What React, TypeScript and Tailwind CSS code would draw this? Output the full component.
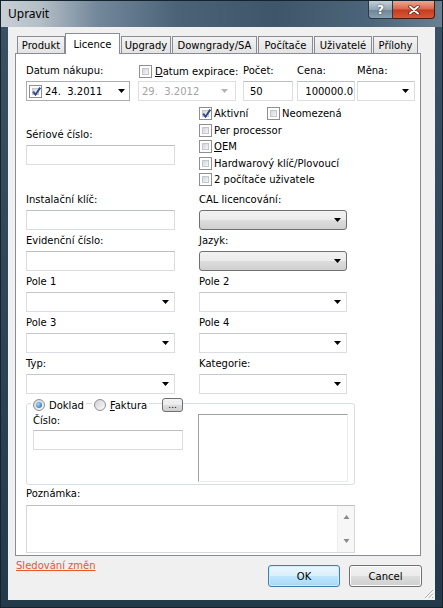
import type { ReactNode } from 'react';

/* Vista-style "Upravit" dialog, Licence tab */

function DropArrow({ dim = false }: { dim?: boolean }) {
  return (
    <svg width="7" height="4" viewBox="0 0 7 4" className="shrink-0">
      <path d="M0 0h7L3.5 4z" fill={dim ? '#b4b4b4' : '#000'} />
    </svg>
  );
}

function CheckBox({ checked = false }: { checked?: boolean }) {
  return (
    <span className="relative flex h-[13px] w-[13px] shrink-0 border border-[#8e8f8f] bg-white p-[2px]">
      <span className="block h-full w-full border border-[#c3c6cb] bg-[linear-gradient(135deg,#d3d6da,#f6f6f6)]" />
      {checked && (
        <svg className="absolute left-[1px] top-[0px]" width="11" height="11" viewBox="0 0 11 11">
          <path d="M2.2 5.6l2.3 3.1L9.3 1.6" fill="none" stroke="#2e4a86" strokeWidth="1.9" />
        </svg>
      )}
    </span>
  );
}

function Radio({ checked = false }: { checked?: boolean }) {
  return (
    <span className="flex h-[12px] w-[12px] shrink-0 items-center justify-center rounded-full border border-[#8e8f8f] bg-[linear-gradient(135deg,#cfd2d6,#fbfbfb)]">
      {checked && <span className="h-[6px] w-[6px] rounded-full bg-[radial-gradient(circle_at_35%_35%,#9fd8ff,#1b5fae)]" />}
    </span>
  );
}

function Label({ children }: { children: ReactNode }) {
  return <div className="h-[14px] whitespace-nowrap leading-[14px]">{children}</div>;
}

function TextBox({ children, className = '' }: { children?: ReactNode; className?: string }) {
  return (
    <div className={`flex h-[20px] items-center border border-[#dadde2] border-t-[#bcc0c5] bg-white ${className}`}>
      {children}
    </div>
  );
}

function Combo() {
  return (
    <div className="flex h-[20px] items-center justify-end border border-[#dadde2] border-t-[#c4c7cc] bg-white pr-[5px]">
      <DropArrow />
    </div>
  );
}

function GrayCombo() {
  return (
    <div className="flex h-[20px] items-center justify-end rounded-[3px] border border-[#707070] bg-[linear-gradient(to_bottom,#f2f2f2_0%,#ebebeb_50%,#dddddd_50%,#cfcfcf_100%)] pr-[5px]">
      <DropArrow />
    </div>
  );
}

function Field({ label, children }: { label: ReactNode; children: ReactNode }) {
  return (
    <div className="flex flex-col gap-[3px]">
      <Label>{label}</Label>
      {children}
    </div>
  );
}

function CheckRow({ label, checked = false }: { label: ReactNode; checked?: boolean }) {
  return (
    <div className="flex h-[13px] items-center gap-[2px] whitespace-nowrap">
      <CheckBox checked={checked} />
      <span className="leading-[13px]">{label}</span>
    </div>
  );
}

const TABS = [
  { name: 'Produkt', w: 'w-[48px]' },
  { name: 'Licence', w: 'w-[55px]', active: true },
  { name: 'Upgrady', w: 'w-[50px] ml-[1px]' },
  { name: 'Downgrady/SA', w: 'w-[85px] ml-[1px]' },
  { name: 'Počítače', w: 'w-[55px] ml-[1px]' },
  { name: 'Uživatelé', w: 'w-[58px] ml-[1px]' },
  { name: 'Přílohy', w: 'w-[45px] ml-[1px]' },
];

export default function App() {
  return (
    <div className="flex h-[608px] w-[443px] flex-col overflow-hidden border border-[#14242f] bg-[linear-gradient(to_bottom,#3a5264,#24394a)] font-['DejaVu_Sans',sans-serif] text-[10px] text-black">
      {/* Title bar */}
      <div className="flex h-[26px] shrink-0 items-start bg-[linear-gradient(to_right,#c9d0d5_0%,#b3bec6_9%,#72879a_22%,#4c6377_40%,#3f566a_62%,#4d657a_84%,#6a7f90_100%)]">
        <span className="mt-[5px] pl-[7px] font-['Noto_Sans',sans-serif] text-[12px] leading-[16px] text-black">Upravit</span>
        <div className="ml-auto mr-[7px] flex">
          <div className="flex h-[18px] w-[25px] items-center justify-center rounded-bl-[4px] border border-t-0 border-[#2a3a48] bg-[linear-gradient(to_bottom,#c6d0d8_0%,#93a4b2_50%,#6f8597_52%,#8aa0b1_100%)] font-['DejaVu_Sans',sans-serif] text-[12px] font-bold text-white [text-shadow:0_0_2px_#233]">
            ?
          </div>
          <div className="flex h-[18px] w-[42px] items-center justify-center rounded-br-[4px] border border-l-0 border-t-0 border-[#4a1a10] bg-[linear-gradient(to_bottom,#e9a894_0%,#d8664a_48%,#c33b1c_52%,#d9573a_100%)]">
            <svg width="12" height="10" viewBox="0 0 12 10">
              <path d="M2 1.5l8 7M10 1.5l-8 7" stroke="#5a1d10" strokeWidth="3.4" strokeLinecap="round" />
              <path d="M2 1.5l8 7M10 1.5l-8 7" stroke="#fff" strokeWidth="2" strokeLinecap="round" />
            </svg>
          </div>
        </div>
      </div>

      {/* Client area */}
      <div className="mx-[7px] flex h-[573px] flex-col bg-[#f0f0f0]">
        {/* Tabs */}
        <div className="relative z-10 ml-[9px] mt-[6px] flex h-[20px] items-end">
          {TABS.map((t) =>
            t.active ? (
              <div
                key={t.name}
                className={`-mb-px flex h-[21px] items-start justify-center border border-b-0 border-[#898c95] bg-white pt-[3px] ${t.w}`}
              >
                {t.name}
              </div>
            ) : (
              <div
                key={t.name}
                className={`flex h-[17px] items-center justify-center border border-b-0 border-[#898c95] bg-[linear-gradient(to_bottom,#f3f3f3,#e3e3e3)] ${t.w}`}
              >
                {t.name}
              </div>
            ),
          )}
        </div>

        {/* Tab panel */}
        <div className="ml-[7px] flex h-[503px] w-[406px] flex-col border border-[#898c95] bg-white pl-[10px] pt-[10px]">
          {/* Row 1 */}
          <div className="flex items-start">
            <div className="w-[104px]">
              <Field label="Datum nákupu:">
                <div className="flex h-[20px] items-center border border-[#abadb3] bg-white pl-[2px] pr-[4px]">
                  <CheckBox checked />
                  <span className="ml-[3px] whitespace-pre">24.  3.2011</span>
                  <span className="ml-auto">
                    <DropArrow />
                  </span>
                </div>
              </Field>
            </div>
            <div className="ml-[8px] w-[98px]">
              <div className="flex flex-col gap-[3px]">
                <div className="flex h-[14px] items-center gap-[3px] whitespace-nowrap pl-[1px]">
                  <CheckBox />
                  <span>
                    <span className="underline">D</span>atum expirace:
                  </span>
                </div>
                <div className="flex h-[20px] items-center border border-[#dcdfe3] bg-white pl-[3px] pr-[7px] text-[#a3a3a3]">
                  <span className="whitespace-pre">29.  3.2012</span>
                  <span className="ml-auto">
                    <DropArrow dim />
                  </span>
                </div>
              </div>
            </div>
            <div className="ml-[7px] w-[50px]">
              <Field label="Počet:">
                <TextBox className="pl-[6px]">50</TextBox>
              </Field>
            </div>
            <div className="ml-[4px] w-[58px]">
              <Field label="Cena:">
                <TextBox className="justify-end overflow-hidden pr-[1px]">100000.0</TextBox>
              </Field>
            </div>
            <div className="ml-[2px] w-[58px]">
              <Field label="Měna:">
                <Combo />
              </Field>
            </div>
          </div>

          {/* Row 2: serial + option checkboxes */}
          <div className="flex items-start">
            <div className="mt-[27px] w-[149px]">
              <Field label="Sériové číslo:">
                <TextBox />
              </Field>
            </div>
            <div className="ml-[24px] mt-[6px] flex flex-col gap-[3.5px]">
              <div className="flex">
                <div className="w-[68px]">
                  <CheckRow label="Aktivní" checked />
                </div>
                <CheckRow label="Neomezená" />
              </div>
              <CheckRow label="Per processor" />
              <CheckRow
                label={
                  <>
                    <span className="underline">O</span>EM
                  </>
                }
              />
              <CheckRow label="Hardwarový klíč/Plovoucí" />
              <CheckRow label="2 počítače uživatele" />
            </div>
          </div>

          {/* Field grid */}
          <div className="mt-[7px] grid grid-cols-[149px_148px] gap-x-[24px] gap-y-[4px]">
            <Field label="Instalační klíč:">
              <TextBox />
            </Field>
            <Field label="CAL licencování:">
              <GrayCombo />
            </Field>
            <Field label="Evidenční číslo:">
              <TextBox />
            </Field>
            <Field label="Jazyk:">
              <GrayCombo />
            </Field>
            <Field label="Pole 1">
              <Combo />
            </Field>
            <Field label="Pole 2">
              <Combo />
            </Field>
            <Field label="Pole 3">
              <Combo />
            </Field>
            <Field label="Pole 4">
              <Combo />
            </Field>
            <Field label="Typ:">
              <Combo />
            </Field>
            <Field label="Kategorie:">
              <Combo />
            </Field>
          </div>

          {/* Document group */}
          <div className="relative mt-[9px] flex h-[82px] w-[329px] rounded-[3px] border border-[#d5dfe5] pl-[6px] pt-[10px]">
            <div className="absolute left-[4px] top-[-6px] flex h-[14px] items-center">
              <div className="flex items-center gap-[4px] bg-white px-[2px]">
                <Radio checked />
                <span>Doklad</span>
              </div>
              <div className="ml-[6px] flex items-center gap-[4px] bg-white px-[2px]">
                <Radio />
                <span>
                  <span className="underline">F</span>aktura
                </span>
              </div>
              <div className="ml-[13px] flex h-[14px] w-[21px] items-end justify-center rounded-[3px] border border-[#707070] bg-[linear-gradient(to_bottom,#f2f2f2_0%,#ebebeb_50%,#dddddd_50%,#cfcfcf_100%)] pb-[1px] text-[9px] leading-[9px]">
                ...
              </div>
            </div>
            <div className="w-[150px]">
              <div className="flex flex-col gap-[2px]">
                <Label>Číslo:</Label>
                <TextBox />
              </div>
            </div>
            <div className="ml-[15px] h-[68px] w-[150px] border border-[#ececec] border-l-[#a0a0a0] border-t-[#a0a0a0] bg-white" />
          </div>

          {/* Note */}
          <div className="mt-[2px] flex flex-col gap-[4px]">
            <Label>Poznámka:</Label>
            <div className="flex h-[48px] w-[329px] justify-end border border-[#d5d9de] border-t-[#bcc0c5] bg-white">
              <div className="flex w-[17px] flex-col justify-between border-l border-[#ededed] bg-[#f7f7f7] py-[9px]">
                <svg width="17" height="4" viewBox="0 0 17 4">
                  <path d="M5.5 4h6L8.5 0z" fill="#8a8a8a" />
                </svg>
                <svg width="17" height="4" viewBox="0 0 17 4">
                  <path d="M5.5 0h6L8.5 4z" fill="#8a8a8a" />
                </svg>
              </div>
            </div>
          </div>
        </div>

        {/* Bottom row */}
        <div className="relative flex h-[44px] items-start pl-[8px] pr-[13px]">
          <a className="mt-[3px] cursor-pointer leading-[14px] text-[#e8572a] underline">Sledování změn</a>
          <div className="ml-auto mt-[9px] flex gap-[9px]">
            <button className="flex h-[22px] w-[72px] items-center justify-center rounded-[3px] border border-[#3c7fb1] bg-[linear-gradient(to_bottom,#eaf6fd_0%,#d9f0fc_50%,#bee6fd_50%,#a7d9f5_100%)] shadow-[inset_0_0_0_1px_#d2ecfa]">
              OK
            </button>
            <button className="flex h-[22px] w-[73px] items-center justify-center rounded-[3px] border border-[#707070] bg-[linear-gradient(to_bottom,#f2f2f2_0%,#ebebeb_50%,#dddddd_50%,#cfcfcf_100%)] shadow-[inset_0_0_0_1px_#fbfbfb]">
              Cancel
            </button>
          </div>
          <svg className="absolute bottom-[1px] right-[1px]" width="11" height="11" viewBox="0 0 11 11">
            <path d="M10 2L2 10M10 5.5L5.5 10M10 9L9 10" stroke="#a9afb5" strokeWidth="1" />
            <path d="M10.5 3L3 10.5M10.5 6.5L6.5 10.5" stroke="#ffffff" strokeWidth="1" />
          </svg>
        </div>
      </div>
    </div>
  );
}
